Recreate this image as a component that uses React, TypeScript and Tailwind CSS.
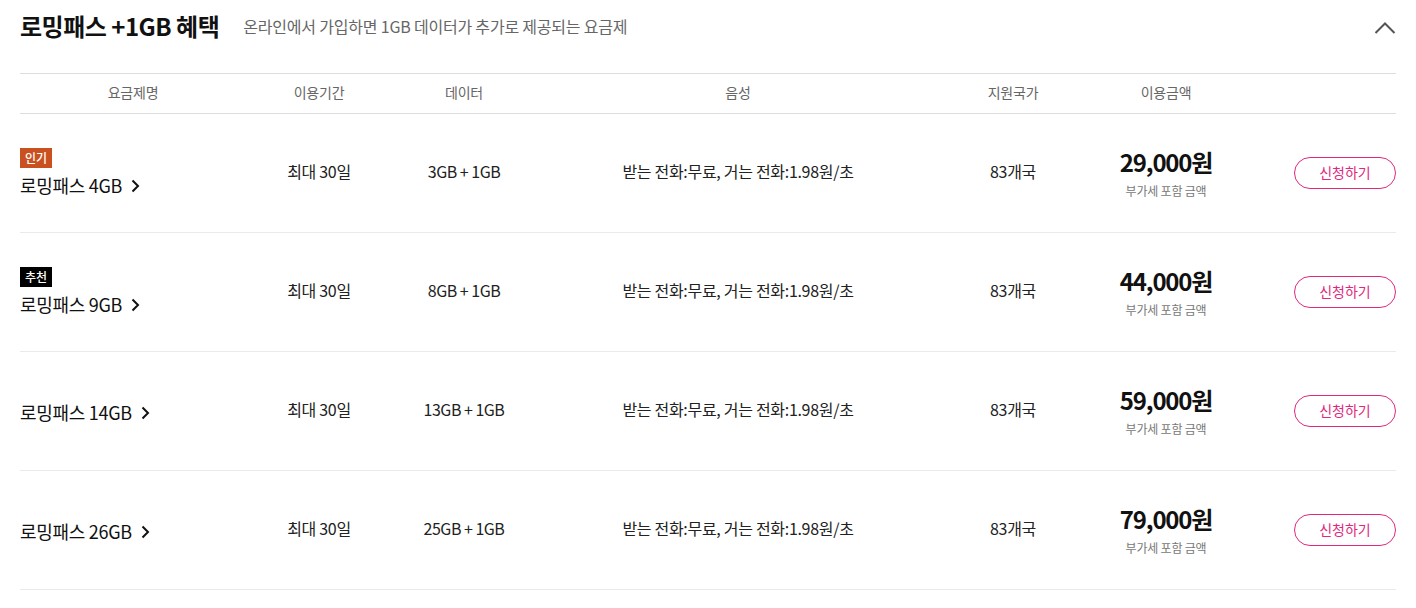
const plans = [
  { name: "로밍패스 4GB", badge: "인기", badgeClass: "bg-[#c9501f]", data: "3GB + 1GB", price: "29,000원" },
  { name: "로밍패스 9GB", badge: "추천", badgeClass: "bg-black", data: "8GB + 1GB", price: "44,000원" },
  { name: "로밍패스 14GB", badge: "", badgeClass: "", data: "13GB + 1GB", price: "59,000원" },
  { name: "로밍패스 26GB", badge: "", badgeClass: "", data: "25GB + 1GB", price: "79,000원" },
];

const cols = "grid grid-cols-[226px_146px_144px_404px_146px_160px_1fr] items-center";

export default function App() {
  return (
    <div className="bg-white px-5 font-['Noto_Sans_CJK_KR','Noto_Sans',sans-serif] text-[#222]">
      {/* Title */}
      <div className="flex h-[51px] items-center">
        <h2 className="text-[24px] font-bold tracking-[-0.5px] text-[#111] leading-none">
          로밍패스 +1GB 혜택
        </h2>
        <p className="ml-6 text-[16px] tracking-[-0.2px] text-[#666] leading-none">
          온라인에서 가입하면 1GB 데이터가 추가로 제공되는 요금제
        </p>
        <svg className="ml-auto mt-1" width="22" height="14" viewBox="0 0 22 14" fill="none">
          <path d="M1.5 12 L11 2.5 L20.5 12" stroke="#555" strokeWidth="2" />
        </svg>
      </div>

      {/* Table */}
      <div className="mt-[22px] border-t border-[#ddd]">
        <div className={`${cols} h-[40px] border-b border-[#ddd] pb-[3px] text-[14px] tracking-[-0.2px] text-[#666]`}>
          <div className="text-center">요금제명</div>
          <div className="text-center">이용기간</div>
          <div className="text-center">데이터</div>
          <div className="text-center">음성</div>
          <div className="text-center">지원국가</div>
          <div className="text-center">이용금액</div>
          <div />
        </div>

        {plans.map(p => (
          <div key={p.name} className={`${cols} h-[119px] border-b border-[#eaeaea] pb-[4px] text-[16px] tracking-[-0.3px]`}>
            <div className={`flex flex-col items-start ${p.badge ? "pt-[1px]" : "pt-[6px]"}`}>
              {p.badge && (
                <span className={`${p.badgeClass} mb-[7px] flex h-5 w-8 items-center justify-center pb-px text-[12px] font-medium leading-none tracking-normal text-white`}>
                  {p.badge}
                </span>
              )}
              <span className="flex items-center text-[18px] leading-5 tracking-[-0.3px] text-[#111]">
                {p.name}
                <svg className="ml-[9px] mt-[2px]" width="9" height="14" viewBox="0 0 9 14" fill="none">
                  <path d="M1.5 1.5 L7 7 L1.5 12.5" stroke="#111" strokeWidth="2" />
                </svg>
              </span>
            </div>
            <div className="text-center">최대 30일</div>
            <div className="text-center tracking-[-0.5px]">{p.data}</div>
            <div className="text-center">받는 전화:무료, 거는 전화:1.98원/초</div>
            <div className="text-center">83개국</div>
            <div className="flex flex-col items-center pt-[5px]">
              <span className="text-[24px] font-bold leading-[26px] tracking-[-1.2px] text-[#111]">{p.price}</span>
              <span className="mt-[8px] text-[12px] leading-4 tracking-[-0.2px] text-[#777]">부가세 포함 금액</span>
            </div>
            <div className="flex justify-end pt-[4px]">
              <button className="flex h-8 w-[102px] items-center justify-center rounded-full border border-[#e0287d] pb-[2px] text-[14px] tracking-normal text-[#e0287d]">
                신청하기
              </button>
            </div>
          </div>
        ))}
      </div>
    </div>
  );
}
